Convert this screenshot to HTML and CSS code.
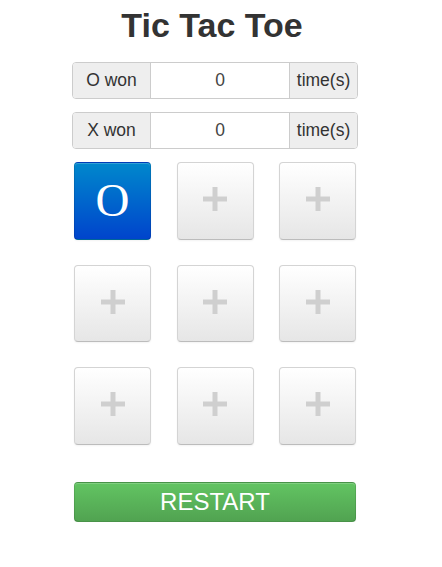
FILE: index.html
```html
<!DOCTYPE html>
<html>
<head>
<meta charset="utf-8">
<title>Tic Tac Toe</title>
<link rel="stylesheet" href="styles.css">
</head>
<body>
<div class="wrap">
  <h1 class="title">Tic Tac Toe</h1>
  <div class="score">
    <span class="addon addon-left">O won</span>
    <span class="value">0</span>
    <span class="addon addon-right">time(s)</span>
  </div>
  <div class="score">
    <span class="addon addon-left">X won</span>
    <span class="value">0</span>
    <span class="addon addon-right">time(s)</span>
  </div>
  <div class="board">
    <div class="row">
      <button class="cell cell-o">O</button>
      <button class="cell"><svg class="plus" viewBox="0 0 24 24" width="24" height="24"><rect x="0" y="9.5" width="24" height="5"/><rect x="9.5" y="0" width="5" height="24"/></svg></button>
      <button class="cell"><svg class="plus" viewBox="0 0 24 24" width="24" height="24"><rect x="0" y="9.5" width="24" height="5"/><rect x="9.5" y="0" width="5" height="24"/></svg></button>
    </div>
    <div class="row">
      <button class="cell"><svg class="plus" viewBox="0 0 24 24" width="24" height="24"><rect x="0" y="9.5" width="24" height="5"/><rect x="9.5" y="0" width="5" height="24"/></svg></button>
      <button class="cell"><svg class="plus" viewBox="0 0 24 24" width="24" height="24"><rect x="0" y="9.5" width="24" height="5"/><rect x="9.5" y="0" width="5" height="24"/></svg></button>
      <button class="cell"><svg class="plus" viewBox="0 0 24 24" width="24" height="24"><rect x="0" y="9.5" width="24" height="5"/><rect x="9.5" y="0" width="5" height="24"/></svg></button>
    </div>
    <div class="row">
      <button class="cell"><svg class="plus" viewBox="0 0 24 24" width="24" height="24"><rect x="0" y="9.5" width="24" height="5"/><rect x="9.5" y="0" width="5" height="24"/></svg></button>
      <button class="cell"><svg class="plus" viewBox="0 0 24 24" width="24" height="24"><rect x="0" y="9.5" width="24" height="5"/><rect x="9.5" y="0" width="5" height="24"/></svg></button>
      <button class="cell"><svg class="plus" viewBox="0 0 24 24" width="24" height="24"><rect x="0" y="9.5" width="24" height="5"/><rect x="9.5" y="0" width="5" height="24"/></svg></button>
    </div>
  </div>
  <button class="restart">RESTART</button>
</div>
</body>
</html>
```

FILE: styles.css
```css
html, body {
  margin: 0;
  padding: 0;
  background: #fff;
}
body {
  font-family: "Liberation Sans", Arial, Helvetica, sans-serif;
  color: #333;
}
.wrap {
  width: 286px;
  margin-left: 72px;
  display: flex;
  flex-direction: column;
}
.title {
  margin: 5px 0 0 0;
  font-size: 34px;
  line-height: 40px;
  font-weight: bold;
  text-align: center;
  color: #333;
  padding-right: 6px;
}
.score {
  margin-top: 17px;
  height: 37px;
  box-sizing: border-box;
  border: 1px solid #ccc;
  border-radius: 4px;
  display: flex;
  font-size: 17.5px;
  overflow: hidden;
}
.score + .score {
  margin-top: 13px;
}
.addon {
  background: #eee;
  display: flex;
  align-items: center;
  justify-content: center;
  color: #333;
}
.addon-left {
  width: 77px;
  border-right: 1px solid #ccc;
}
.addon-right {
  width: 67px;
  border-left: 1px solid #ccc;
}
.value {
  flex: 1;
  display: flex;
  align-items: center;
  justify-content: center;
  background: #fff;
  color: #444;
}
.board {
  margin-top: 13px;
  padding: 0 2px 0 2px;
  display: flex;
  flex-direction: column;
  gap: 25px;
}
.row {
  display: flex;
  justify-content: space-between;
}
.cell {
  width: 77px;
  height: 77.5px;
  box-sizing: border-box;
  margin: 0;
  padding: 0 0 3px 0;
  border: 1px solid #d4d4d4;
  border-bottom-color: #bcbcbc;
  border-radius: 4px;
  background: linear-gradient(#ffffff, #e6e6e6);
  box-shadow: inset 0 1px 0 rgba(255,255,255,.2), 0 1px 2px rgba(0,0,0,.05);
  display: flex;
  align-items: center;
  justify-content: center;
}
.plus {
  fill: #cfcfcf;
  display: block;
}
.cell-o {
  background: linear-gradient(#0088cc, #0044cc);
  border-color: rgba(0,0,0,.1) rgba(0,0,0,.1) rgba(0,0,0,.25);
  color: #fff;
  font-family: "Liberation Serif", "Times New Roman", serif;
  font-size: 47px;
  line-height: 1;
  padding: 0 0 1px 0;
}
.restart {
  margin: 37px 2px 0 2px;
  height: 40px;
  box-sizing: border-box;
  border: 1px solid rgba(0,0,0,.1);
  border-bottom-color: rgba(0,0,0,.25);
  border-radius: 4px;
  background: linear-gradient(#62c462, #51a351);
  color: #fff;
  font-family: "Liberation Sans", Arial, sans-serif;
  font-size: 24px;
  line-height: 1;
  padding: 0;
  box-shadow: inset 0 1px 0 rgba(255,255,255,.2), 0 1px 2px rgba(0,0,0,.05);
}
```
